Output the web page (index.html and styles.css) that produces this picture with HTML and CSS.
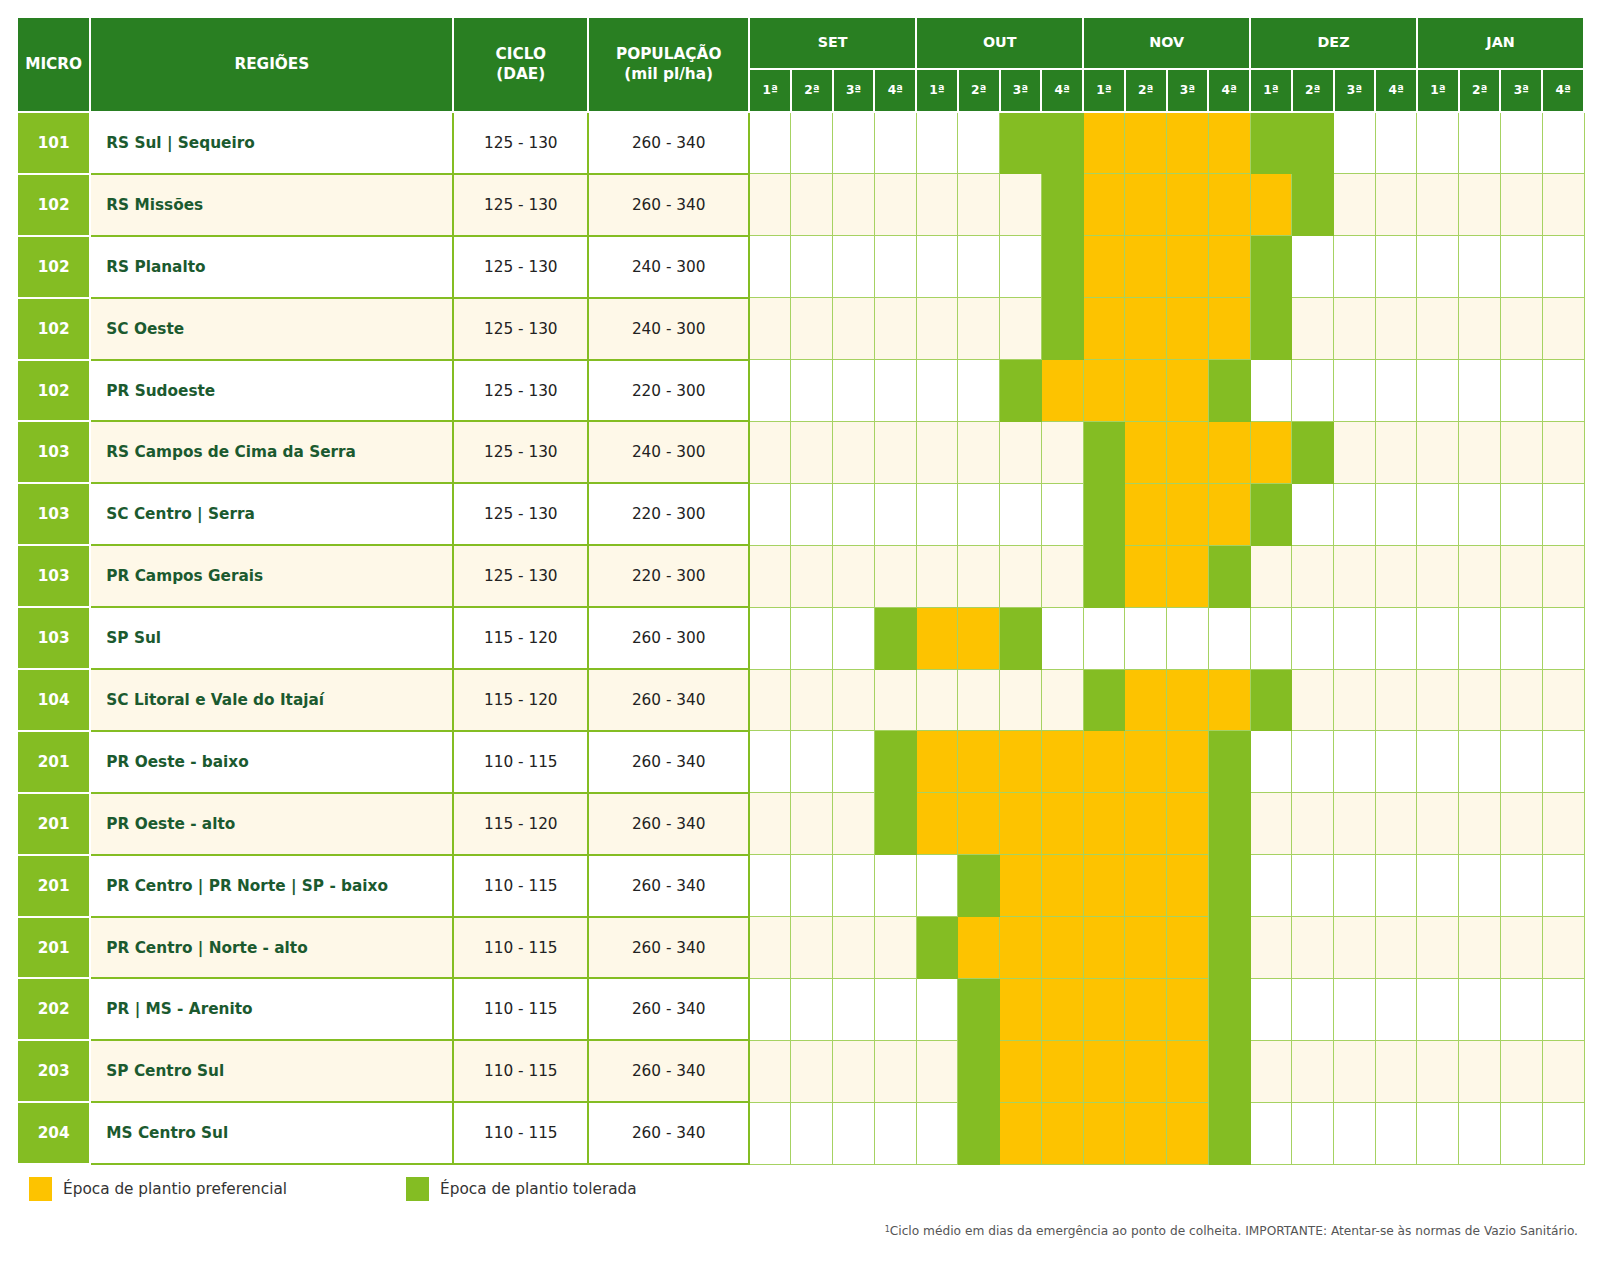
FILE: index.html
```html
<!DOCTYPE html>
<html lang="pt-BR">
<head>
<meta charset="utf-8">
<title>Época de plantio</title>
<link rel="stylesheet" href="styles.css">
</head>
<body>
<div class="page">
<table class="plan">
<colgroup>
<col class="c-micro"><col class="c-reg"><col class="c-ciclo"><col class="c-pop">
<col span="20" class="c-wk">
</colgroup>
<thead>
<tr class="h1">
<th rowspan="2">MICRO</th><th rowspan="2">REGIÕES</th><th rowspan="2">CICLO<br>(DAE)</th><th rowspan="2">POPULAÇÃO<br>(mil pl/ha)</th>
<th colspan="4">SET</th><th colspan="4">OUT</th><th colspan="4">NOV</th><th colspan="4">DEZ</th><th colspan="4">JAN</th>
</tr>
<tr class="h2">
<th>1ª</th><th>2ª</th><th>3ª</th><th>4ª</th><th>1ª</th><th>2ª</th><th>3ª</th><th>4ª</th><th>1ª</th><th>2ª</th><th>3ª</th><th>4ª</th><th>1ª</th><th>2ª</th><th>3ª</th><th>4ª</th><th>1ª</th><th>2ª</th><th>3ª</th><th>4ª</th>
</tr>
</thead>
<tbody>
<tr><td class="m">101</td><td class="r">RS Sul | Sequeiro</td><td class="n">125 - 130</td><td class="n">260 - 340</td>
<td></td><td></td><td></td><td></td><td></td><td></td><td class="g"></td><td class="g"></td><td class="y"></td><td class="y"></td><td class="y"></td><td class="y"></td><td class="g"></td><td class="g"></td><td></td><td></td><td></td><td></td><td></td><td></td></tr>
<tr><td class="m">102</td><td class="r">RS Missões</td><td class="n">125 - 130</td><td class="n">260 - 340</td>
<td></td><td></td><td></td><td></td><td></td><td></td><td></td><td class="g"></td><td class="y"></td><td class="y"></td><td class="y"></td><td class="y"></td><td class="y"></td><td class="g"></td><td></td><td></td><td></td><td></td><td></td><td></td></tr>
<tr><td class="m">102</td><td class="r">RS Planalto</td><td class="n">125 - 130</td><td class="n">240 - 300</td>
<td></td><td></td><td></td><td></td><td></td><td></td><td></td><td class="g"></td><td class="y"></td><td class="y"></td><td class="y"></td><td class="y"></td><td class="g"></td><td></td><td></td><td></td><td></td><td></td><td></td><td></td></tr>
<tr><td class="m">102</td><td class="r">SC Oeste</td><td class="n">125 - 130</td><td class="n">240 - 300</td>
<td></td><td></td><td></td><td></td><td></td><td></td><td></td><td class="g"></td><td class="y"></td><td class="y"></td><td class="y"></td><td class="y"></td><td class="g"></td><td></td><td></td><td></td><td></td><td></td><td></td><td></td></tr>
<tr><td class="m">102</td><td class="r">PR Sudoeste</td><td class="n">125 - 130</td><td class="n">220 - 300</td>
<td></td><td></td><td></td><td></td><td></td><td></td><td class="g"></td><td class="y"></td><td class="y"></td><td class="y"></td><td class="y"></td><td class="g"></td><td></td><td></td><td></td><td></td><td></td><td></td><td></td><td></td></tr>
<tr><td class="m">103</td><td class="r">RS Campos de Cima da Serra</td><td class="n">125 - 130</td><td class="n">240 - 300</td>
<td></td><td></td><td></td><td></td><td></td><td></td><td></td><td></td><td class="g"></td><td class="y"></td><td class="y"></td><td class="y"></td><td class="y"></td><td class="g"></td><td></td><td></td><td></td><td></td><td></td><td></td></tr>
<tr><td class="m">103</td><td class="r">SC Centro | Serra</td><td class="n">125 - 130</td><td class="n">220 - 300</td>
<td></td><td></td><td></td><td></td><td></td><td></td><td></td><td></td><td class="g"></td><td class="y"></td><td class="y"></td><td class="y"></td><td class="g"></td><td></td><td></td><td></td><td></td><td></td><td></td><td></td></tr>
<tr><td class="m">103</td><td class="r">PR Campos Gerais</td><td class="n">125 - 130</td><td class="n">220 - 300</td>
<td></td><td></td><td></td><td></td><td></td><td></td><td></td><td></td><td class="g"></td><td class="y"></td><td class="y"></td><td class="g"></td><td></td><td></td><td></td><td></td><td></td><td></td><td></td><td></td></tr>
<tr><td class="m">103</td><td class="r">SP Sul</td><td class="n">115 - 120</td><td class="n">260 - 300</td>
<td></td><td></td><td></td><td class="g"></td><td class="y"></td><td class="y"></td><td class="g"></td><td></td><td></td><td></td><td></td><td></td><td></td><td></td><td></td><td></td><td></td><td></td><td></td><td></td></tr>
<tr><td class="m">104</td><td class="r">SC Litoral e Vale do Itajaí</td><td class="n">115 - 120</td><td class="n">260 - 340</td>
<td></td><td></td><td></td><td></td><td></td><td></td><td></td><td></td><td class="g"></td><td class="y"></td><td class="y"></td><td class="y"></td><td class="g"></td><td></td><td></td><td></td><td></td><td></td><td></td><td></td></tr>
<tr><td class="m">201</td><td class="r">PR Oeste - baixo</td><td class="n">110 - 115</td><td class="n">260 - 340</td>
<td></td><td></td><td></td><td class="g"></td><td class="y"></td><td class="y"></td><td class="y"></td><td class="y"></td><td class="y"></td><td class="y"></td><td class="y"></td><td class="g"></td><td></td><td></td><td></td><td></td><td></td><td></td><td></td><td></td></tr>
<tr><td class="m">201</td><td class="r">PR Oeste - alto</td><td class="n">115 - 120</td><td class="n">260 - 340</td>
<td></td><td></td><td></td><td class="g"></td><td class="y"></td><td class="y"></td><td class="y"></td><td class="y"></td><td class="y"></td><td class="y"></td><td class="y"></td><td class="g"></td><td></td><td></td><td></td><td></td><td></td><td></td><td></td><td></td></tr>
<tr><td class="m">201</td><td class="r">PR Centro | PR Norte | SP - baixo</td><td class="n">110 - 115</td><td class="n">260 - 340</td>
<td></td><td></td><td></td><td></td><td></td><td class="g"></td><td class="y"></td><td class="y"></td><td class="y"></td><td class="y"></td><td class="y"></td><td class="g"></td><td></td><td></td><td></td><td></td><td></td><td></td><td></td><td></td></tr>
<tr><td class="m">201</td><td class="r">PR Centro | Norte - alto</td><td class="n">110 - 115</td><td class="n">260 - 340</td>
<td></td><td></td><td></td><td></td><td class="g"></td><td class="y"></td><td class="y"></td><td class="y"></td><td class="y"></td><td class="y"></td><td class="y"></td><td class="g"></td><td></td><td></td><td></td><td></td><td></td><td></td><td></td><td></td></tr>
<tr><td class="m">202</td><td class="r">PR | MS - Arenito</td><td class="n">110 - 115</td><td class="n">260 - 340</td>
<td></td><td></td><td></td><td></td><td></td><td class="g"></td><td class="y"></td><td class="y"></td><td class="y"></td><td class="y"></td><td class="y"></td><td class="g"></td><td></td><td></td><td></td><td></td><td></td><td></td><td></td><td></td></tr>
<tr><td class="m">203</td><td class="r">SP Centro Sul</td><td class="n">110 - 115</td><td class="n">260 - 340</td>
<td></td><td></td><td></td><td></td><td></td><td class="g"></td><td class="y"></td><td class="y"></td><td class="y"></td><td class="y"></td><td class="y"></td><td class="g"></td><td></td><td></td><td></td><td></td><td></td><td></td><td></td><td></td></tr>
<tr><td class="m">204</td><td class="r">MS Centro Sul</td><td class="n">110 - 115</td><td class="n">260 - 340</td>
<td></td><td></td><td></td><td></td><td></td><td class="g"></td><td class="y"></td><td class="y"></td><td class="y"></td><td class="y"></td><td class="y"></td><td class="g"></td><td></td><td></td><td></td><td></td><td></td><td></td><td></td><td></td></tr>
</tbody>
</table>
<div class="legend">
<div class="leg-item"><span class="sw sw-y"></span>Época de plantio preferencial</div>
<div class="leg-item"><span class="sw sw-g"></span>Época de plantio tolerada</div>
</div>
<p class="note"><sup>1</sup>Ciclo médio em dias da emergência ao ponto de colheita. IMPORTANTE: Atentar-se às normas de Vazio Sanitário.</p>
</div>
</body>
</html>
```

FILE: styles.css
```css
html, body {
  margin: 0;
  padding: 0;
  background: #ffffff;
}
body {
  font-family: "DejaVu Sans", "Liberation Sans", sans-serif;
  color: #222222;
}
.page {
  margin: 0 0 0 16px;
  padding-top: 16px;
  width: 1569px;
}
.plan {
  width: 1569px;
  table-layout: fixed;
  border-collapse: collapse;
}
.c-micro { width: 4.68%; }
.c-reg { width: 23.17%; }
.c-ciclo { width: 8.6%; }
.c-pop { width: 10.28%; }
.c-wk { width: 2.6635%; }

.plan th {
  background: #297f22;
  color: #ffffff;
  font-weight: bold;
  border: 2px solid #ffffff;
  padding: 0;
  text-align: center;
  vertical-align: middle;
}
.h1 th {
  height: 49.5px;
  font-size: 15.3px;
  line-height: 19.5px;
}
.h1 th[colspan] {
  font-size: 14.3px;
}
.h2 th {
  height: 41.5px;
  font-size: 12.2px;
}

.plan td {
  height: 59.9px;
  padding: 0;
  border: 1px solid #a6d262;
  background: #ffffff;
}
.plan tbody tr:nth-child(even) td {
  background: #fef8e8;
}
.plan td.m,
.plan tbody tr:nth-child(even) td.m {
  background: #84bd23;
  color: #ffffff;
  font-weight: bold;
  font-size: 15.3px;
  text-align: center;
  border: 2px solid #ffffff;
}
.plan td.r {
  color: #1b5a2f;
  font-weight: bold;
  font-size: 15.3px;
  padding-left: 15px;
  border: 2px solid #84bd23;
  border-left-color: #ffffff;
}
.plan td.n {
  font-size: 15.3px;
  text-align: center;
  color: #222222;
  border: 2px solid #84bd23;
}
.plan td.g,
.plan tbody tr:nth-child(even) td.g {
  background: #84bd23;
  border-color: #84bd23;
}
.plan td.y,
.plan tbody tr:nth-child(even) td.y {
  background: #fdc300;
}

.legend {
  display: flex;
  align-items: center;
  padding: 12px 0 0 13px;
  height: 24px;
}
.leg-item {
  display: flex;
  align-items: center;
  gap: 11px;
  font-size: 15.3px;
  color: #333333;
  width: 377px;
}
.sw {
  display: inline-block;
  width: 23px;
  height: 23.5px;
}
.sw-y { background: #fdc300; }
.sw-g { background: #84bd23; }

.note {
  margin: 23px 0 0 0;
  text-align: right;
  padding-right: 7px;
  font-size: 12.2px;
  color: #555555;
}
.note sup {
  font-size: 8px;
  vertical-align: top;
  line-height: 12px;
}
```
